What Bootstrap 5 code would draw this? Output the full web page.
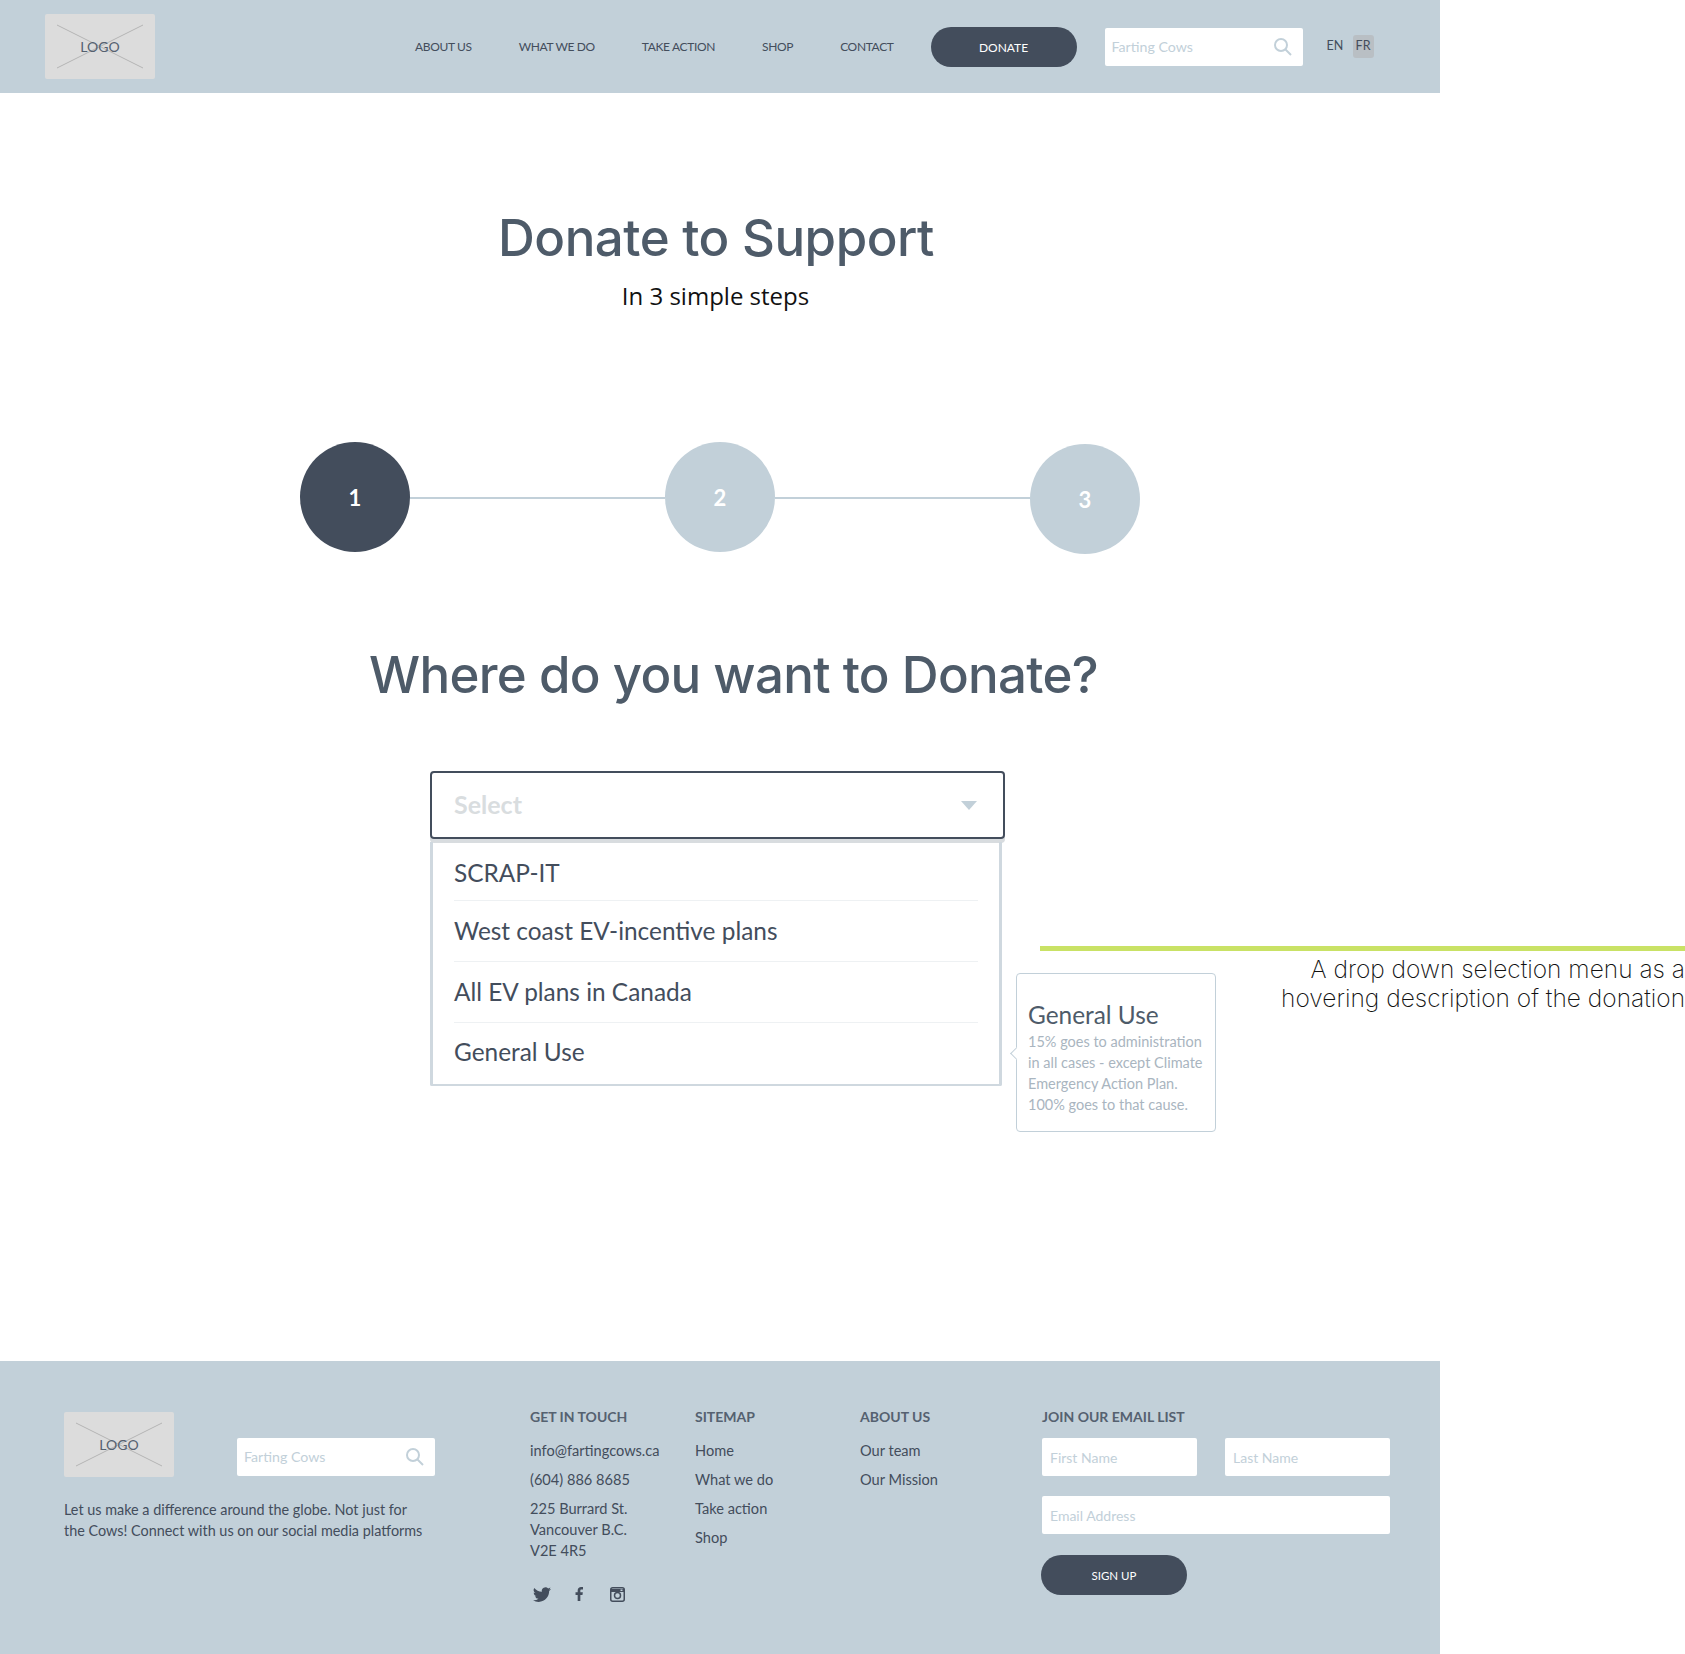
<!DOCTYPE html>
<html lang="en">
<head>
  <meta charset="UTF-8">
  <title>Donate to Support</title>
  <link href="https://cdn.jsdelivr.net/npm/bootstrap@5.3.3/dist/css/bootstrap.min.css" rel="stylesheet">
  <style>
    body { font-family: "Lato", "Noto Sans", sans-serif; color: #434d5c; background: #fff; position: relative; height: 1654px; overflow: hidden; }
    .page-wrap { width: 1440px; }
    .top-bar { height: 93px; background: #c2d0d9; padding-left: 45px; }
    .logo-box { width: 110px; height: 65px; flex: none; background: #dcdcdc; border-radius: 2px; position: relative; font-size: 14px; color: #556170; }
    .logo-box svg { position: absolute; inset: 0; }
    .logo-box span { position: relative; }
    .nav-links { margin-left: 260px; font-size: 12px; letter-spacing: -0.35px; gap: 47px; }
    .nav-links a { color: #434d5c; text-decoration: none; }
    .btn-dark-pill { background: #434d5c; color: #fff; font-size: 12px; width: 146px; height: 40px; padding: 2px 0 0; border: 0; border-radius: 20px; }
    .btn-dark-pill:hover { background: #434d5c; color: #fff; }
    .top-donate { margin-left: 37px; }
    .search-box { width: 198px; height: 38px; background: #fff; border-radius: 2px; padding: 0 11px 0 7px; font-size: 14.2px; color: #c2d0d9; }
    .top-search { margin-left: 28px; }
    .foot-search { margin: 26px 0 0 63px; }
    .field-box { height: 38px; border: 0; border-radius: 2px; padding: 0 8px; font-size: 14px; }
    .field-box::placeholder { color: #c2d0d9; }
    .field-first { width: 155px; flex: none; }
    .field-last { width: 165px; flex: none; }
    .field-mail { margin-top: 20px; }
    .lang-en { font-size: 12.5px; margin-left: 24px; width: 26px; }
    .lang-fr { font-size: 12.5px; width: 21px; height: 23px; background: #b9bfc4; border-radius: 3px; }
    .main-area { height: 1268px; position: relative; }
    .big-title { font-family: "Inter", "Lato", sans-serif; font-weight: 500; font-size: 51px; line-height: 62px; color: #4e5b69; margin: 0; letter-spacing: -0.5px; }
    .title-one { padding-top: 114px; padding-right: 8px; }
    .sub-title { font-family: "Open Sans", sans-serif; font-size: 24px; line-height: 36px; color: #111; margin: 9px 1px 0 0; }
    .stepper { margin: 128px 0 0 300px; width: 840px; height: 112px; }
    .step-dot { width: 110px; height: 110px; flex: none; color: #fff; font-weight: 700; font-size: 22px; }
    .step-on { background: #434d5c; }
    .step-off { background: #c2d0d9; }
    .step-low { margin-top: 2px; }
    .step-line { flex: 1; height: 2px; margin-top: 55px; background: #c2d0d9; }
    .title-two { margin: 90px 0 0 369px; width: 728px; white-space: nowrap; letter-spacing: -0.7px; }
    .select-box { width: 575px; height: 68px; margin: 65px 0 0 430px; border: 2px solid #434d5c; border-radius: 4px; padding: 0 26px 0 22px; font-size: 25px; font-weight: 700; color: #d9dddf; box-shadow: 0 4px 0 #d8dcdf; }
    .select-caret { width: 0; height: 0; border-left: 8px solid transparent; border-right: 8px solid transparent; border-top: 9px solid #c2d0d9; }
    .drop-list { width: 572px; margin: 3px 0 0 430px; border: solid #cfd8df; border-width: 0 3px 2px 3px; border-radius: 0 0 2px 2px; padding: 0 21px; }
    .drop-item { height: 61px; font-size: 24.4px; color: #434d5c; background: transparent; border: 0; border-bottom: 1px solid #eef1f3; padding: 1px 0 0; border-radius: 0; }
    .drop-item:first-child { height: 59px; padding-top: 4px; }
    .drop-item:last-child { border-bottom: 0; height: 61px; padding: 1px 0 3px; }
    .hover-card { position: absolute; left: 1016px; top: 880px; width: 200px; height: 159px; background: #fff; border: 1px solid #c2d0d9; border-radius: 4px; padding: 25px 11px 0; }
    .hover-card::before { content: ""; position: absolute; left: -5px; top: 75px; width: 9px; height: 9px; background: #fff; border-left: 1px solid #c2d0d9; border-bottom: 1px solid #c2d0d9; transform: rotate(45deg); }
    .hover-title { font-size: 24.4px; line-height: 32px; color: #4e5b69; }
    .hover-text { font-size: 14.5px; line-height: 21px; color: #a9b5c0; margin: 0; white-space: nowrap; }
    .note-bar { position: absolute; left: 1040px; right: 0; top: 946px; height: 5px; background: #c9e265; }
    .note-text { position: absolute; right: 0; top: 955px; width: 420px; text-align: right; font-family: "Inter", "Lato", sans-serif; font-weight: 200; font-size: 24.5px; line-height: 29px; color: #111; margin: 0; }
    .foot-bar { height: 293px; background: #c2d0d9; padding: 51px 0 0 64px; font-size: 14.6px; color: #434d5c; }
    .foot-left { width: 466px; }
    .foot-text { line-height: 21px; margin: 22px 0 0; white-space: nowrap; font-size: 14.4px; }
    .foot-col { width: 165px; }
    .foot-col-last { width: 182px; }
    .foot-head { font-weight: 700; font-size: 14px; line-height: 20px; color: #556170; margin: -5px 0 13px; }
    .foot-form .foot-head { margin-bottom: 11px; }
    .foot-col ul, .foot-col-last ul { margin: 0; padding: 0; list-style: none; }
    .foot-col li, .foot-col-last li { line-height: 21px; margin-bottom: 8px; }
    .foot-col a, .foot-col-last a { color: #434d5c; text-decoration: none; }
    .social-row { margin-top: 24px; padding-left: 2px; gap: 23px; }
    .social-insta { margin-left: 4px; }
    .foot-form { width: 348px; }
    .gap-name { gap: 28px; }
    .btn-sign { margin: 21px 0 0 -1px; font-size: 11.5px; }
  </style>
</head>
<body>
<div class="page-wrap">
  <header class="top-bar d-flex align-items-center">
    <div class="logo-box d-flex align-items-center justify-content-center">
      <svg width="110" height="65" viewBox="0 0 110 65"><path d="M12 11 98 54M98 11 12 54" stroke="#b5b5b5" stroke-width="1"/></svg>
      <span>LOGO</span>
    </div>
    <nav class="nav-links d-flex align-items-center">
      <a href="#">ABOUT US</a>
      <a href="#">WHAT WE DO</a>
      <a href="#">TAKE ACTION</a>
      <a href="#">SHOP</a>
      <a href="#">CONTACT</a>
    </nav>
    <button class="btn btn-dark-pill top-donate">DONATE</button>
    <div class="search-box top-search d-flex align-items-center justify-content-between">
      <span>Farting Cows</span>
      <svg width="18" height="18" viewBox="0 0 18 18" fill="none" stroke="#c2d0d9" stroke-width="2"><circle cx="7" cy="7" r="6"/><path d="M11.5 11.5 17 17"/></svg>
    </div>
    <span class="lang-en">EN</span>
    <span class="lang-fr d-flex align-items-center justify-content-center">FR</span>
  </header>

  <main class="main-area">
    <div class="text-center title-one">
      <h1 class="big-title">Donate to Support</h1>
      <p class="sub-title">In 3 simple steps</p>
    </div>

    <div class="stepper d-flex align-items-start">
      <div class="step-dot step-on rounded-circle d-flex align-items-center justify-content-center">1</div>
      <div class="step-line"></div>
      <div class="step-dot step-off rounded-circle d-flex align-items-center justify-content-center">2</div>
      <div class="step-line"></div>
      <div class="step-dot step-off step-low rounded-circle d-flex align-items-center justify-content-center">3</div>
    </div>

    <h2 class="big-title title-two">Where do you want to Donate?</h2>

    <div class="select-box d-flex align-items-center justify-content-between">
      <span>Select</span>
      <span class="select-caret"></span>
    </div>
    <div class="drop-list list-group">
      <div class="list-group-item drop-item d-flex align-items-center">SCRAP-IT</div>
      <div class="list-group-item drop-item d-flex align-items-center">West coast EV-incentive plans</div>
      <div class="list-group-item drop-item d-flex align-items-center">All EV plans in Canada</div>
      <div class="list-group-item drop-item d-flex align-items-center">General Use</div>
    </div>

    <div class="hover-card">
      <div class="hover-title">General Use</div>
      <p class="hover-text">15% goes to administration<br>in all cases - except Climate<br>Emergency Action Plan.<br>100% goes to that cause.</p>
    </div>
  </main>

  <footer class="foot-bar d-flex align-items-start">
    <div class="foot-left">
      <div class="d-flex align-items-start">
        <div class="logo-box d-flex align-items-center justify-content-center">
          <svg width="110" height="65" viewBox="0 0 110 65"><path d="M12 11 98 54M98 11 12 54" stroke="#b5b5b5" stroke-width="1"/></svg>
          <span>LOGO</span>
        </div>
        <div class="search-box foot-search d-flex align-items-center justify-content-between">
          <span>Farting Cows</span>
          <svg width="18" height="18" viewBox="0 0 18 18" fill="none" stroke="#c2d0d9" stroke-width="2"><circle cx="7" cy="7" r="6"/><path d="M11.5 11.5 17 17"/></svg>
        </div>
      </div>
      <p class="foot-text">Let us make a difference around the globe. Not just for<br>the Cows! Connect with us on our social media platforms</p>
    </div>

    <div class="foot-col">
      <p class="foot-head">GET IN TOUCH</p>
      <ul>
        <li>info@fartingcows.ca</li>
        <li>(604) 886 8685</li>
        <li>225 Burrard St.<br>Vancouver B.C.<br>V2E 4R5</li>
      </ul>
      <div class="social-row d-flex align-items-center">
        <svg width="20" height="18" viewBox="0 0 16 16" fill="#434d5c"><path d="M5.026 15c6.038 0 9.341-5.003 9.341-9.334 0-.14 0-.282-.006-.422A6.685 6.685 0 0 0 16 3.542a6.658 6.658 0 0 1-1.889.518 3.301 3.301 0 0 0 1.447-1.817 6.533 6.533 0 0 1-2.087.793A3.286 3.286 0 0 0 7.875 6.03a9.325 9.325 0 0 1-6.767-3.429 3.289 3.289 0 0 0 1.018 4.382A3.323 3.323 0 0 1 .64 6.575v.045a3.288 3.288 0 0 0 2.632 3.218 3.203 3.203 0 0 1-.865.115 3.23 3.23 0 0 1-.614-.057 3.283 3.283 0 0 0 3.067 2.277A6.588 6.588 0 0 1 .78 13.58a6.32 6.32 0 0 1-.78-.045A9.344 9.344 0 0 0 5.026 15z"/></svg>
        <svg width="8" height="16" viewBox="0 0 9 16" fill="#434d5c"><path d="M6 16V9h2.4l.4-3H6V4.200c0-.9.300-1.400 1.400-1.400H9V.2C8.600.1 7.800 0 6.900 0 4.600 0 3 1.400 3 4v2H.6v3H3v7z"/></svg>
        <svg class="social-insta" width="15" height="15" viewBox="0 0 15 15" fill="none" stroke="#434d5c" stroke-width="1.5"><rect x=".75" y=".75" width="13.500" height="13.500" rx="2"/><circle cx="7.500" cy="8.500" r="3"/><path d="M1 3.500h13" stroke-width="3"/><rect x="10.500" y="2.500" width="2" height="1.500" fill="#c2d0d9" stroke="none"/></svg>
      </div>
    </div>

    <div class="foot-col">
      <p class="foot-head">SITEMAP</p>
      <ul>
        <li><a href="#">Home</a></li>
        <li><a href="#">What we do</a></li>
        <li><a href="#">Take action</a></li>
        <li><a href="#">Shop</a></li>
      </ul>
    </div>

    <div class="foot-col-last">
      <p class="foot-head">ABOUT US</p>
      <ul>
        <li><a href="#">Our team</a></li>
        <li><a href="#">Our Mission</a></li>
      </ul>
    </div>

    <div class="foot-form">
      <p class="foot-head">JOIN OUR EMAIL LIST</p>
      <div class="d-flex gap-name">
        <input class="form-control field-box field-first" placeholder="First Name">
        <input class="form-control field-box field-last" placeholder="Last Name">
      </div>
      <input class="form-control field-box field-mail" placeholder="Email Address">
      <button class="btn btn-dark-pill btn-sign">SIGN UP</button>
    </div>
  </footer>
</div>

<div class="note-bar"></div>
<p class="note-text">A drop down selection menu as a<br>hovering description of the donation</p>
<script src="https://cdn.jsdelivr.net/npm/bootstrap@5.3.3/dist/js/bootstrap.bundle.min.js"></script>
</body>
</html>
